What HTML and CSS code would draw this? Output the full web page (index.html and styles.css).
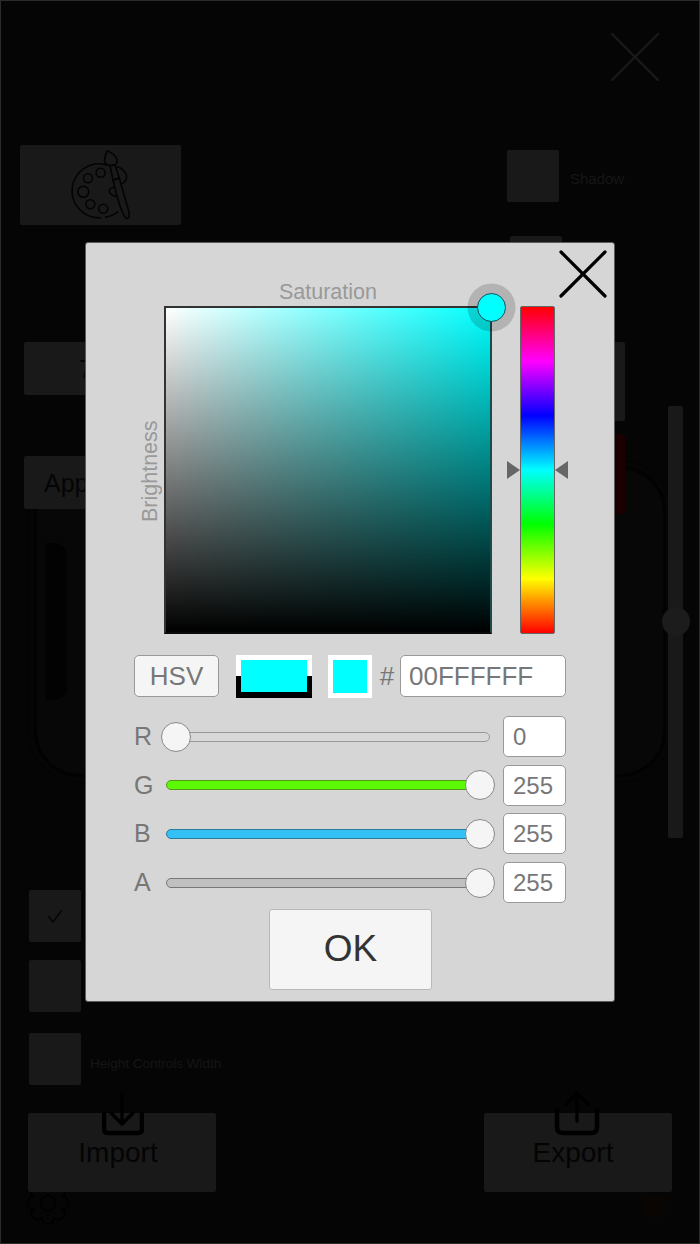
FILE: index.html
```html
<!DOCTYPE html>
<html lang="en">
<head>
<meta charset="utf-8">
<title>Color picker</title>
<link rel="stylesheet" href="styles.css">
</head>
<body>
<div class="page">
  <div class="backdrop">
    <div class="top-row">
      <svg class="top-close" viewBox="0 0 48 48"><path d="M1 1L47 47M47 1L1 47"/></svg>
    </div>
    <div class="palette-row">
      <div class="palette-btn dim">
        <svg class="palette-icon" viewBox="0 0 161 80" fill="none">
          <path d="M88.300 20.500A27 27 0 1 0 81 72.800M85 72.300A27 27 0 0 0 98.300 66.700"/>
          <circle cx="68" cy="33.300" r="4.500"/><circle cx="80.700" cy="27.700" r="4.500"/><circle cx="63.300" cy="46.700" r="5.500"/>
          <circle cx="70.300" cy="59.300" r="4.500"/><circle cx="83.300" cy="63.700" r="4.500"/>
          <path d="M87.300 5.700Q94.500 8.500 97.300 15Q97 19 95 20L90 20.500Q85 19.500 84.500 15.500Q85 10 87.300 5.700Z"/>
          <path d="M90 20.500L95 20L99.300 33.300L93 35Z"/>
          <path d="M93 35L99.300 33.300L109 67Q110 74 106 73.300Q100 66 93 35Z"/>
          <path d="M97 21.500Q105 24 106.700 31.700Q106 37.500 100.700 39.300M95 41.700Q88 44 89.300 46.700Q90.500 50 96.700 51.700"/>
        </svg>
      </div>
      <div class="shadow-col">
        <div class="shadow-line"><div class="box dim"></div><span class="shadow-label">Shadow</span></div>
        <div class="box box-second dim"></div>
      </div>
    </div>
    <div class="mid">
      <div class="phone"><div class="phone-pill"></div></div>
      <div class="mid-left">
        <div class="wide-btn dim"><span class="wide-text seven">7</span></div>
        <div class="wide-btn dim"><span class="wide-text">Apply</span></div>
      </div>
      <div class="mid-right">
        <div class="side-btns">
          <div class="side-box dim"></div>
          <div class="side-box side-red"></div>
        </div>
        <div class="v-slider"><div class="v-knob"></div></div>
      </div>
    </div>
    <div class="checks">
      <div class="box dim check-box">
        <svg class="check" viewBox="0 0 16 14" fill="none"><path d="M1 7L6 13L15 1"/></svg>
      </div>
      <div class="box dim"></div>
      <div class="check-line"><div class="box dim"></div><span class="check-label">Height Controls Width</span></div>
    </div>
    <div class="bottom-row">
      <div class="big-btn dim">
        <svg class="import-icon" viewBox="0 0 42 44" fill="none">
          <path class="thin" d="M20 2V30M9 21L20 32L31 21"/>
          <path d="M2 22V37Q2 41 6 41H36Q40 41 40 37V22"/>
        </svg>
        <span class="big-text import-text">Import</span>
      </div>
      <div class="big-btn dim">
        <svg class="export-icon" viewBox="0 0 46 46" fill="none">
          <path class="thin" d="M23 31V4M12 14L23 3L34 14"/>
          <path d="M3 20V37Q3 43 9 43H37Q43 43 43 37V20"/>
        </svg>
        <span class="big-text export-text">Export</span>
      </div>
    </div>
    <div class="foot-row">
      <svg class="gear" viewBox="0 0 44 44" fill="none">
        <circle cx="22" cy="22" r="7.500"/>
        <path d="M36.800 15.900A6 6 0 0 1 36.800 28.100A6 6 0 0 1 28.100 36.800A6 6 0 0 1 15.900 36.800A6 6 0 0 1 7.200 28.100A6 6 0 0 1 7.200 15.900A6 6 0 0 1 15.900 7.200A6 6 0 0 1 28.100 7.200A6 6 0 0 1 36.800 15.900Z"/>
      </svg>
      <div class="foot-mark"></div>
    </div>
  </div>

  <div class="modal">
    <svg class="modal-close" viewBox="0 0 48 48"><path d="M2 2L46 46M46 2L2 46"/></svg>
    <div class="sat-label">Saturation</div>
    <div class="picker">
      <div class="bright-label">Brightness</div>
      <div class="sv-box"><div class="sv-knob"></div></div>
      <div class="hue-bar">
        <span class="arrow arrow-l"></span>
        <span class="arrow arrow-r"></span>
      </div>
    </div>
    <div class="tools">
      <div class="hsv-btn">HSV</div>
      <div class="preview"><div class="preview-fill"></div></div>
      <div class="swatch"></div>
      <div class="hash">#</div>
      <div class="field hex">00FFFFFF</div>
    </div>
    <div class="sliders">
      <div class="s-row">
        <span class="s-label">R</span>
        <div class="track track-r"><span class="knob knob-min"></span></div>
        <div class="field val">0</div>
      </div>
      <div class="s-row">
        <span class="s-label">G</span>
        <div class="track track-g"><span class="knob knob-max"></span></div>
        <div class="field val">255</div>
      </div>
      <div class="s-row">
        <span class="s-label">B</span>
        <div class="track track-b"><span class="knob knob-max"></span></div>
        <div class="field val">255</div>
      </div>
      <div class="s-row">
        <span class="s-label">A</span>
        <div class="track track-a"><span class="knob knob-max"></span></div>
        <div class="field val">255</div>
      </div>
    </div>
    <div class="ok-btn">OK</div>
  </div>
</div>
</body>
</html>
```
FILE: styles.css
```css
* { box-sizing: border-box; }
html, body { margin: 0; padding: 0; }
body { font-family: "Liberation Sans", Arial, sans-serif; background: #050505; }

.page {
  position: relative;
  width: 700px;
  height: 1244px;
  overflow: hidden;
  background: #050505;
  border: 1px solid #2b2b2b;
}

/* dimmed screen behind the dialog */
.backdrop { display: flex; flex-direction: column; height: 1242px; margin: 0 -1px; }
.dim { background: #191919; border-radius: 2px; }
.box { width: 52px; height: 52px; }

.top-row { height: 144px; display: flex; justify-content: flex-end; padding: 32px 41px 0 0; }
.top-close { width: 48px; height: 48px; }
.top-close path { fill: none; stroke: #191919; stroke-width: 2.400; stroke-linecap: round; }

.palette-row { height: 197px; display: flex; justify-content: space-between; padding-left: 20px; }
.palette-btn { width: 161px; height: 80px; }
.palette-icon { display: block; width: 161px; height: 80px; }
.palette-icon path, .palette-icon circle { stroke: #040404; stroke-width: 1.600; }
.shadow-col { width: 193px; padding-top: 5px; }
.shadow-line { display: flex; align-items: center; gap: 11px; }
.shadow-label { font-size: 15px; color: #161616; position: relative; top: 2px; }
.box-second { margin: 34px 0 0 3px; }

.mid { height: 548px; display: grid; grid-template-columns: 1fr; }
.phone, .mid-left, .mid-right { grid-area: 1 / 1; }
.phone {
  margin: 124px 34px 113px 34px;
  border: 3px solid #020202;
  outline: 1px solid #030303;
  outline-offset: 5px;
  border-radius: 46px;
  background: #070707;
  padding-top: 74px;
}
.phone-pill { width: 22px; height: 157px; margin-left: 8px; background: #020202; border-radius: 0 12px 12px 0; }
.mid-left { padding-left: 24px; display: flex; flex-direction: column; gap: 61px; }
.wide-btn { width: 120px; height: 53px; display: flex; align-items: center; padding-left: 20px; }
.wide-text { font-size: 25px; color: #050505; position: relative; top: 1px; }
.seven { padding-left: 35px; }
.mid-right { display: flex; justify-content: flex-end; padding: 0 17px 0 0; gap: 43px; }
.side-btns { display: flex; flex-direction: column; gap: 13px; }
.side-box { width: 60px; height: 79px; }
.side-red { height: 80px; background: #1a0000; border-radius: 2px; }
.v-slider {
  width: 15px; height: 432px; margin-top: 64px; background: #191919; border-radius: 2px;
  display: flex; justify-content: center; padding-top: 201px;
}
.v-knob { width: 28px; height: 29px; flex: none; border-radius: 50%; background: #1c1c1c; }

.checks { padding-left: 29px; display: flex; flex-direction: column; gap: 18px; height: 223px; }
.check-box { display: flex; align-items: center; justify-content: center; }
.check { width: 16px; height: 14px; }
.check path { stroke: #050505; stroke-width: 1.400; }
.check-line { display: flex; align-items: center; gap: 9px; margin-top: 3px; }
.check-label { font-size: 13.500px; color: #151515; position: relative; top: 4px; }

.bottom-row { position: relative; z-index: 1; display: flex; justify-content: space-between; padding: 0 28px; }
.big-btn { position: relative; width: 188px; height: 79px; text-align: center; }
.big-text { display: block; font-size: 28px; line-height: 32px; padding-top: 24px; color: #040404; }
.import-text { padding-right: 8px; }
.export-text { padding-right: 10px; }
.import-icon { position: absolute; left: 74px; top: -21px; width: 42px; height: 44px; }
.export-icon { position: absolute; left: 70px; top: -23px; width: 46px; height: 46px; }
.import-icon path, .export-icon path { stroke: #000; stroke-width: 4.500; stroke-linecap: round; stroke-linejoin: round; }
.import-icon .thin, .export-icon .thin { stroke-width: 3.400; }

.foot-row { flex: 1; display: flex; justify-content: space-between; align-items: flex-start; padding: 0 35px 0 26px; }
.gear { width: 44px; height: 44px; margin-top: -11px; }
.gear path, .gear circle { stroke: #000; stroke-width: 1.800; }
.foot-mark { width: 22px; height: 22px; margin-top: 4px; background: #080502; border-radius: 4px; }

/* dialog */
.modal {
  position: absolute;
  left: 84px;
  top: 241px;
  width: 530px;
  height: 760px;
  background: #d6d6d6;
  border: 1px solid #5c5c5c;
  border-radius: 3px;
  padding: 35px 0 0 48px;
}
.modal-close { position: absolute; left: 473px; top: 7px; width: 48px; height: 48px; }
.modal-close path { fill: none; stroke: #000; stroke-width: 3.200; stroke-linecap: round; }

.sat-label { width: 328px; margin-left: 30px; font-size: 21.500px; line-height: 26px; color: #999; text-align: center; position: relative; top: 1px; }
.picker { display: flex; align-items: flex-start; margin-top: 2px; margin-left: 5px; }
.bright-label {
  writing-mode: vertical-rl; transform: rotate(180deg);
  width: 20px; height: 328px; margin-right: 5px; padding-top: 112px;
  font-size: 21.500px; line-height: 22px; color: #999; white-space: nowrap; text-align: left;
}
.sv-box {
  position: relative; width: 328px; height: 328px; border: 2px solid #333;
  border-right-color: #1f4a4a; border-bottom-color: #0a0a0a;
  background: linear-gradient(to top, #000, rgba(0,0,0,0)), linear-gradient(to right, #fff, #00ffff);
}
.sv-knob {
  position: absolute; right: -16px; top: -15px; width: 29px; height: 29px; border-radius: 50%;
  background: #00ffff; border: 1px solid #1d4a55; box-shadow: 0 0 0 9.500px rgba(0,0,0,.16);
}
.hue-bar {
  position: relative; width: 35px; height: 328px; margin-left: 28px; border: 1px solid #666; border-radius: 2px;
  background: linear-gradient(to bottom, #f00 0%, #f0f 16.670%, #00f 33.330%, #0ff 50%, #0f0 66.670%, #ff0 83.330%, #f00 100%);
}
.arrow { position: absolute; top: 154px; width: 0; height: 0; border-top: 9px solid transparent; border-bottom: 9px solid transparent; }
.arrow-l { left: -14px; border-left: 13px solid #666; }
.arrow-r { right: -14px; border-right: 13px solid #666; }

.tools { display: flex; align-items: flex-start; margin-top: 21px; }
.hsv-btn {
  width: 85px; height: 42px; background: #f5f5f5; border: 1px solid #999; border-radius: 5px;
  font-size: 26px; line-height: 40px; color: #777; text-align: center;
}
.preview {
  width: 76px; height: 43px; margin-left: 17px; padding: 5px;
  background: linear-gradient(to bottom, #fff 50%, #000 50%);
}
.preview-fill { width: 66px; height: 32px; background: #00ffff; }
.swatch { width: 44px; height: 43px; margin-left: 16px; border: 5px solid #fff; background: #00ffff; }
.hash { width: 28px; padding-left: 2px; font-size: 26px; line-height: 42px; color: #777; text-align: center; }
.field { background: #fff; border: 1px solid #999; border-radius: 5px; color: #777; }
.hex { width: 166px; height: 42px; font-size: 26px; line-height: 40px; padding-left: 8px; }

.sliders { display: flex; flex-direction: column; gap: 7.700px; margin-top: 18px; }
.s-row { display: flex; align-items: center; height: 41px; }
.s-label { width: 32px; font-size: 25px; color: #777; }
.track { position: relative; width: 324px; height: 10px; border-radius: 5px; border: 1.500px solid; margin-right: 13px; }
.track-r { background: #d8d8d8; border-color: #999; }
.track-g { background: #5cf806; border-color: #4f9a14; }
.track-b { background: #32c0f5; border-color: #2a7b9c; }
.track-a { background: #c0c0c0; border-color: #777; }
.knob {
  position: absolute; top: -11px; width: 30px; height: 30px; border-radius: 50%;
  background: #f5f5f5; border: 1.500px solid #888;
}
.knob-min { left: -6px; }
.knob-max { right: -6px; }
.val { width: 63px; height: 41px; font-size: 24px; line-height: 39px; padding-left: 9px; }

.ok-btn {
  width: 163px; height: 81px; margin: 6px 0 0 135px;
  background: #f5f5f5; border: 1.500px solid #b9b9b9; border-radius: 3px;
  font-size: 37px; line-height: 78px; color: #333; text-align: center;
}
```
